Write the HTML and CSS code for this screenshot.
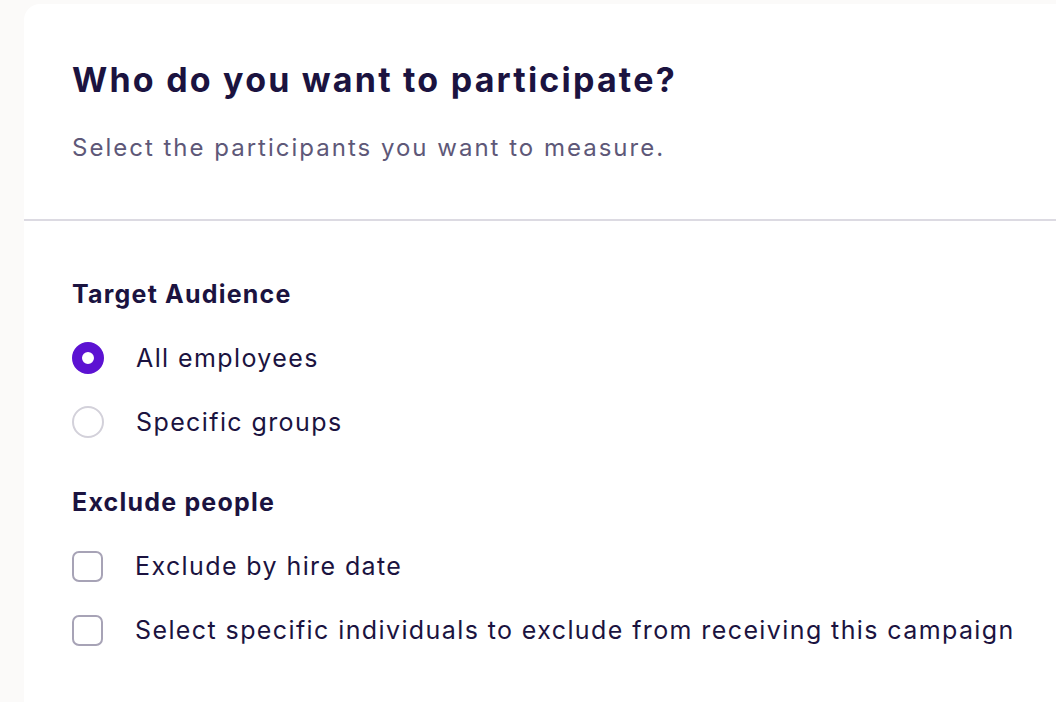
FILE: index.html
```html
<!DOCTYPE html>
<html>
<head>
<meta charset="utf-8">
<link rel="stylesheet" href="styles.css">
</head>
<body>
<div class="card">
  <div class="header">
    <h1 class="title">Who do you want to participate?</h1>
    <p class="subtitle">Select the participants you want to measure.</p>
  </div>
  <div class="body">
    <h2 class="section">Target Audience</h2>
    <div class="option">
      <span class="radio checked"></span>
      <span class="label">All employees</span>
    </div>
    <div class="option">
      <span class="radio"></span>
      <span class="label">Specific groups</span>
    </div>
    <h2 class="section section-second">Exclude people</h2>
    <div class="option">
      <span class="checkbox"></span>
      <span class="label">Exclude by hire date</span>
    </div>
    <div class="option">
      <span class="checkbox"></span>
      <span class="label">Select specific individuals to exclude from receiving this campaign</span>
    </div>
  </div>
</div>
</body>
</html>
```

FILE: styles.css
```css
html, body {
  margin: 0;
  padding: 0;
  background: #fbfaf9;
  height: 100%;
  overflow: hidden;
}
body {
  font-family: "Inter", "Lato", sans-serif;
  color: #1b1340;
  padding: 4px 0 0 24px;
}
.card {
  background: #ffffff;
  border-top-left-radius: 16px;
  min-height: 720px;
}
.header {
  padding: 52px 48px 55px 48px;
  border-bottom: 2px solid #dcdae2;
}
.title {
  margin: 0;
  font-size: 34px;
  font-weight: 700;
  line-height: 48px;
  letter-spacing: 2.2px;
  color: #1b1340;
}
.subtitle {
  margin: 28px 0 0 0;
  font-size: 24px;
  line-height: 32px;
  letter-spacing: 2px;
  color: #5e5878;
}
.body {
  padding: 57px 0 0 48px;
}
.section {
  margin: 0;
  font-size: 25px;
  font-weight: 700;
  line-height: 32px;
  letter-spacing: 1.2px;
}
.section-second {
  margin-top: 48px;
}
.option {
  display: flex;
  align-items: center;
  gap: 32px;
  height: 32px;
  margin-top: 32px;
}
.label {
  font-size: 25px;
  line-height: 32px;
  letter-spacing: 1.4px;
  white-space: nowrap;
}
.radio {
  box-sizing: border-box;
  width: 32px;
  height: 32px;
  border-radius: 50%;
  border: 2px solid #d3d1da;
  flex: none;
}
.radio.checked {
  border: 10px solid #5c12d2;
}
.checkbox {
  box-sizing: border-box;
  width: 31px;
  height: 31px;
  border-radius: 7px;
  border: 2px solid #a7a3b6;
  flex: none;
}
```
